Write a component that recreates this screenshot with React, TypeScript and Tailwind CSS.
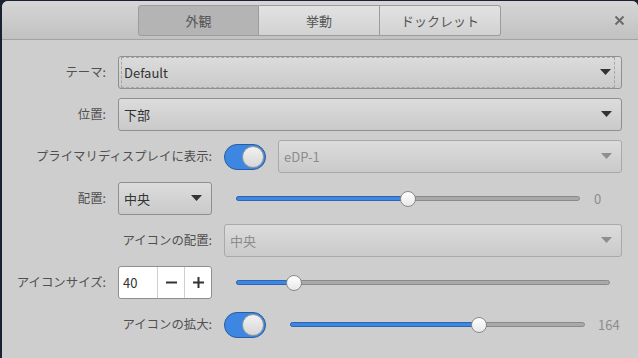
import React from "react";

const font = { fontFamily: '"Noto Sans CJK JP", "Noto Sans", sans-serif' };

const Arrow = ({ disabled }: { disabled?: boolean }) => (
  <svg width="11" height="7" viewBox="0 0 11 7" className="shrink-0">
    <path d="M0 0h11L5.5 6z" fill={disabled ? "#8e8e8e" : "#333"} />
  </svg>
);

const Combo = ({
  text,
  disabled,
  focus,
  className = "",
}: {
  text: string;
  disabled?: boolean;
  focus?: boolean;
  className?: string;
}) => (
  <div
    className={`h-[33px] flex items-center justify-between pl-[5px] pr-[6px] rounded-[3px] border bg-gradient-to-b from-[#dcdcdc] to-[#cacaca] ${
      disabled ? "border-[#a9a9a9] text-[#8c8c8c]" : "border-[#8f8f8f] text-[#333]"
    } ${className}`}
  >
    <div
      className={`flex-1 h-full flex items-center justify-between pr-[3px] ${
        focus ? "border border-dashed border-[#a6a6a6] -ml-[3px] pl-[2px] my-[2px] h-[27px]" : ""
      }`}
    >
      <span className="text-[13px]">{text}</span>
      <Arrow disabled={disabled} />
    </div>
  </div>
);

const Toggle = () => (
  <div className="w-[42px] h-[26px] rounded-full bg-[#3d87e2] border border-[#2a5c9e] relative shrink-0">
    <div className="absolute right-[1px] top-[1px] w-[22px] h-[22px] rounded-full bg-gradient-to-b from-[#f2f2f2] to-[#d6d6d6] border border-[#9a9a9a]" />
  </div>
);

const Slider = ({ pct, className = "" }: { pct: number; className?: string }) => (
  <div className={`relative h-[16px] flex items-center ${className}`}>
    <div className="w-full h-[5px] rounded-full bg-[#a9a9a9] border border-[#8a8a8a]" />
    <div
      className="absolute left-0 h-[5px] rounded-full bg-[#3d87e2] border border-[#2d66b0]"
      style={{ width: `${pct}%` }}
    />
    <div
      className="absolute w-[16px] h-[16px] -ml-[8px] rounded-full bg-gradient-to-b from-white to-[#e8e8e8] border border-[#8a8a8a]"
      style={{ left: `${pct}%` }}
    />
  </div>
);

const Label = ({ children, className = "" }: { children: React.ReactNode; className?: string }) => (
  <div className={`flex items-center justify-end text-[12.4px] text-[#505050] whitespace-nowrap ${className}`}>
    {children}
  </div>
);

const tabs = ["外観", "挙動", "ドックレット"];

export default function App() {
  return (
    <div className="w-[638px] h-[358px] bg-[#1b2130] pt-[1px] pl-[2px] overflow-hidden" style={font}>
      <div className="w-full h-full rounded-tl-[6px] rounded-tr-[6px] bg-[#cecece] flex flex-col">
        <div className="h-[39px] shrink-0 rounded-t-[6px] bg-gradient-to-b from-[#d6d6d6] to-[#c1c1c1] border-b border-[#a3a3a3] flex items-center relative">
          <div className="ml-[136px] flex h-[31px] mt-[1px]">
            {tabs.map((t, i) => (
              <div
                key={t}
                className={`w-[121px] flex items-center justify-center text-[13px] text-[#555] border border-[#9c9c9c] ${
                  i === 0
                    ? "bg-[#b4b4b4] rounded-l-[3px]"
                    : "bg-gradient-to-b from-[#e2e2e2] to-[#d2d2d2] border-l-0"
                } ${i === 2 ? "rounded-r-[3px]" : ""}`}
              >
                {t}
              </div>
            ))}
          </div>
          <div className="absolute right-[13px] top-[14px]">
            <svg width="11" height="11" viewBox="0 0 11 11">
              <path d="M1.5 1.5l8 8M9.5 1.5l-8 8" stroke="#6a6a6a" strokeWidth="2" />
            </svg>
          </div>
        </div>

        <div className="grid grid-cols-[92px_94px_398px] gap-x-3 gap-y-[9px] pl-3 pt-4">
          <Label>テーマ:</Label>
          <Combo text="Default" focus className="col-span-2" />

          <Label>位置:</Label>
          <Combo text="下部" className="col-span-2" />

          <Label className="col-span-2">プライマリディスプレイに表示:</Label>
          <div className="flex items-center gap-3">
            <Toggle />
            <Combo text="eDP-1" disabled className="flex-1" />
          </div>

          <Label>配置:</Label>
          <Combo text="中央" />
          <div className="flex items-center pl-3">
            <Slider pct={50} className="w-[344px]" />
            <span className="ml-[14px] text-[13px] text-[#8c8c8c]">0</span>
          </div>

          <Label className="col-span-2">アイコンの配置:</Label>
          <Combo text="中央" disabled />

          <Label>アイコンサイズ:</Label>
          <div className="h-[33px] flex rounded-[3px] border border-[#8f8f8f] bg-white text-[#333]">
            <div className="w-[38px] flex items-center pl-[4px] text-[13px]">40</div>
            <div className="w-[27px] flex items-center justify-center border-l border-[#cfcfcf]">
              <svg width="11" height="11" viewBox="0 0 11 11">
                <path d="M0 5.5h11" stroke="#333" strokeWidth="2" />
              </svg>
            </div>
            <div className="flex-1 flex items-center justify-center border-l border-[#cfcfcf]">
              <svg width="11" height="11" viewBox="0 0 11 11">
                <path d="M0 5.5h11M5.5 0v11" stroke="#333" strokeWidth="2" />
              </svg>
            </div>
          </div>
          <div className="flex items-center pl-3">
            <Slider pct={15.5} className="w-[374px]" />
          </div>

          <Label className="col-span-2 h-[33px]">アイコンの拡大:</Label>
          <div className="flex items-center">
            <Toggle />
            <Slider pct={64} className="w-[295px] ml-[24px]" />
            <span className="ml-[13px] text-[13px] text-[#8c8c8c]">164</span>
          </div>
        </div>
      </div>
    </div>
  );
}
